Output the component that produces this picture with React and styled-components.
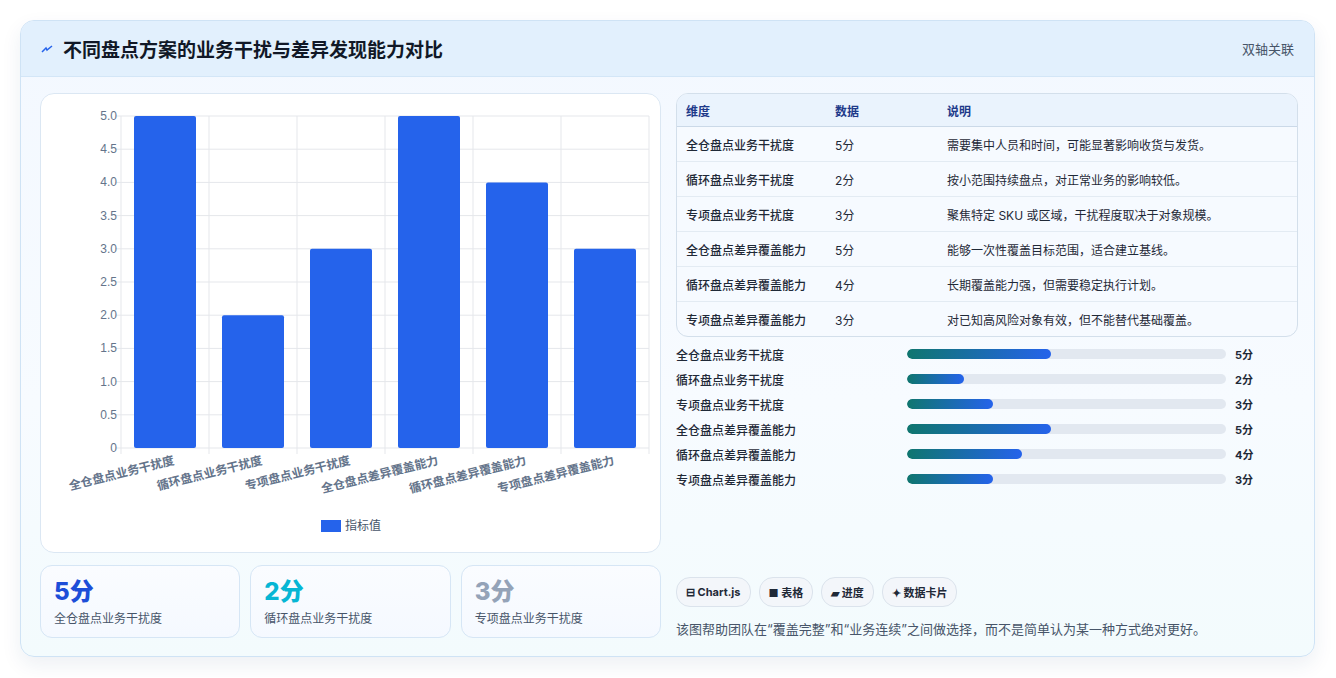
import React from "react";
import styled, { createGlobalStyle } from "styled-components";

const GlobalStyle = createGlobalStyle`
  body { margin: 0; font-family: "Inter", "Noto Sans CJK SC", sans-serif; background: #fff; }
`;

const rows = [
  { name: "全仓盘点业务干扰度", v: 5, note: "需要集中人员和时间，可能显著影响收货与发货。" },
  { name: "循环盘点业务干扰度", v: 2, note: "按小范围持续盘点，对正常业务的影响较低。" },
  { name: "专项盘点业务干扰度", v: 3, note: "聚焦特定 SKU 或区域，干扰程度取决于对象规模。" },
  { name: "全仓盘点差异覆盖能力", v: 5, note: "能够一次性覆盖目标范围，适合建立基线。" },
  { name: "循环盘点差异覆盖能力", v: 4, note: "长期覆盖能力强，但需要稳定执行计划。" },
  { name: "专项盘点差异覆盖能力", v: 3, note: "对已知高风险对象有效，但不能替代基础覆盖。" },
];

const Page = styled.div`
  padding: 20px 21px 20px 20px;
`;
const Card = styled.div`
  border: 1px solid #cfe3f5;
  border-radius: 14px;
  background: linear-gradient(180deg, #f3f8ff 0%, #f7fbff 60%, #f3fbfd 100%);
  box-shadow: 0 8px 20px rgba(30, 60, 110, 0.08);
  overflow: hidden;
  height: 637px;
  box-sizing: border-box;
`;
const Header = styled.div`
  height: 55px;
  display: flex;
  align-items: center;
  justify-content: space-between;
  padding: 0 20px;
  background: #e2f0fd;
  border-bottom: 1px solid #d3e6f7;
`;
const Title = styled.h1`
  margin: 0;
  font-size: 19px;
  font-weight: 700;
  color: #111827;
  display: flex;
  align-items: center;
  gap: 10px;
`;
const HeaderLink = styled.span`
  font-size: 13px;
  color: #475569;
`;
const Body = styled.div`
  display: grid;
  grid-template-columns: 621px 622px;
  gap: 15px;
  padding: 16px 18px 0 19px;
`;
const Col = styled.div`
  display: flex;
  flex-direction: column;
  gap: ${(p) => p.gap || 12}px;
`;
const ChartPanel = styled.div`
  height: 460px;
  box-sizing: border-box;
  background: #fff;
  border: 1px solid #dbe7f3;
  border-radius: 14px;
`;
const Stats = styled.div`
  display: grid;
  grid-template-columns: repeat(3, 1fr);
  gap: 10px;
`;
const Stat = styled.div`
  height: 73px;
  box-sizing: border-box;
  border: 1px solid #d6e6f5;
  border-radius: 12px;
  background: linear-gradient(180deg, #fafcff, #f5f9ff);
  padding: 11px 13px;
`;
const StatValue = styled.div`
  font-size: 24px;
  font-weight: 800;
  color: ${(p) => p.color};
  line-height: 30px;
`;
const StatLabel = styled.div`
  font-size: 12px;
  color: #475569;
  margin-top: 2px;
`;
const Table = styled.table`
  width: 100%;
  border-collapse: separate;
  border-spacing: 0;
  border: 1px solid #d3dfeb;
  border-radius: 12px;
  overflow: hidden;
  font-size: 12px;
  background: #f6faff;
`;
const Th = styled.th`
  text-align: left;
  font-weight: 700;
  color: #1e3a8a;
  height: 32px;
  padding: 0 0 0 9px;
  background: #eaf3fd;
  border-bottom: 1px solid #cbd9e8;
  width: ${(p) => p.w || "auto"};
`;
const Td = styled.td`
  height: 34px;
  padding: 0 0 0 9px;
  color: #1f2937;
  border-top: ${(p) => (p.first ? "none" : "1px solid #e3ebf3")};
  font-weight: ${(p) => (p.bold ? 500 : 400)};
`;
const Bars = styled.div`
  display: flex;
  flex-direction: column;
  gap: 7px;
`;
const BarRow = styled.div`
  display: grid;
  grid-template-columns: 231px 319px 1fr;
  align-items: center;
  height: 18px;
  font-size: 12px;
  color: #1f2937;
  font-weight: 500;
`;
const Track = styled.div`
  height: 10px;
  border-radius: 5px;
  background: #e2e8f0;
  overflow: hidden;
`;
const Fill = styled.div`
  height: 100%;
  border-radius: 5px;
  background: linear-gradient(90deg, #0f766e, #2563eb);
`;
const Score = styled.span`
  padding-left: 9px;
  font-weight: 700;
  font-size: 11px;
`;
const Spacer = styled.div`
  flex: 1;
`;
const Chips = styled.div`
  display: flex;
  gap: 8px;
`;
const Chip = styled.span`
  height: 28px;
  padding: 0 9px;
  display: inline-flex;
  align-items: center;
  gap: 4px;
  border: 1px solid #dbe3ec;
  border-radius: 14px;
  background: #f3f6fa;
  font-size: 11px;
  font-weight: 700;
  color: #1f2937;
`;
const Note = styled.p`
  margin: 0;
  font-size: 13px;
  color: #475569;
`;

function BarChart() {
  const x0 = 80, x1 = 608, y0 = 22, y1 = 354;
  const w = (x1 - x0) / 6;
  const ticks = [0, 0.5, 1, 1.5, 2, 2.5, 3, 3.5, 4, 4.5, 5];
  const y = (v) => y1 - (v / 5) * (y1 - y0);
  return (
    <svg width="619" height="458" style={{ display: "block" }}>
      {ticks.map((t) => (
        <g key={t}>
          <line x1={x0 - 6} x2={x1} y1={y(t)} y2={y(t)} stroke="#e5e7eb" />
          <text x={x0 - 4} y={y(t) + 4} fontSize="12" fill="#64748b" textAnchor="end" fontFamily="Liberation Sans">
            {t === 0 ? "0" : t.toFixed(1)}
          </text>
        </g>
      ))}
      {Array.from({ length: 7 }).map((_, i) => (
        <line key={i} x1={x0 + i * w} x2={x0 + i * w} y1={y0} y2={y1 + 6} stroke="#e5e7eb" />
      ))}
      {rows.map((r, i) => (
        <g key={r.name}>
          <rect x={x0 + i * w + 13} y={y(r.v)} width={w - 26} height={y1 - y(r.v)} rx="2" fill="#2563eb" />
          <text
            transform={`translate(${x0 + i * w + w / 2 + 10} ${y1 + 16}) rotate(-14)`}
            fontSize="12"
            fontWeight="700"
            fill="#64748b"
            textAnchor="end"
            fontFamily="Noto Sans CJK SC"
          >
            {r.name}
          </text>
        </g>
      ))}
      <rect x="280" y="426" width="20" height="12" fill="#2563eb" />
      <text x="304" y="436" fontSize="12" fill="#475569" fontFamily="Noto Sans CJK SC">指标值</text>
    </svg>
  );
}

export default function App() {
  const colors = ["#1d4ed8", "#06b6d4", "#94a3b8"];
  return (
    <Page>
      <GlobalStyle />
      <Card>
        <Header>
          <Title>
            <svg width="12" height="10" viewBox="0 0 12 10">
              <path d="M1 8 L5 4 L6 6 L11 2" stroke="#2563eb" strokeWidth="1.5" fill="none" />
            </svg>
            不同盘点方案的业务干扰与差异发现能力对比
          </Title>
          <HeaderLink>双轴关联</HeaderLink>
        </Header>
        <Body>
          <Col>
            <ChartPanel>
              <BarChart />
            </ChartPanel>
            <Stats>
              {rows.slice(0, 3).map((r, i) => (
                <Stat key={r.name}>
                  <StatValue color={colors[i]}>{r.v}分</StatValue>
                  <StatLabel>{r.name}</StatLabel>
                </Stat>
              ))}
            </Stats>
          </Col>
          <Col gap={8}>
            <Table>
              <thead>
                <tr>
                  <Th w="140px">维度</Th>
                  <Th w="103px">数据</Th>
                  <Th>说明</Th>
                </tr>
              </thead>
              <tbody>
                {rows.map((r, i) => (
                  <tr key={r.name}>
                    <Td first={i === 0} bold>{r.name}</Td>
                    <Td first={i === 0}>{r.v}分</Td>
                    <Td first={i === 0}>{r.note}</Td>
                  </tr>
                ))}
              </tbody>
            </Table>
            <Bars>
              {rows.map((r) => (
                <BarRow key={r.name}>
                  <span>{r.name}</span>
                  <Track>
                    <Fill style={{ width: `${r.v * 9}%` }} />
                  </Track>
                  <Score>{r.v}分</Score>
                </BarRow>
              ))}
            </Bars>
            <Spacer />
            <Chips>
              <Chip>⊟ Chart.js</Chip>
              <Chip>■ 表格</Chip>
              <Chip>▰ 进度</Chip>
              <Chip>✦ 数据卡片</Chip>
            </Chips>
            <Note style={{ marginTop: 4 }}>该图帮助团队在“覆盖完整”和“业务连续”之间做选择，而不是简单认为某一种方式绝对更好。</Note>
          </Col>
        </Body>
      </Card>
    </Page>
  );
}
